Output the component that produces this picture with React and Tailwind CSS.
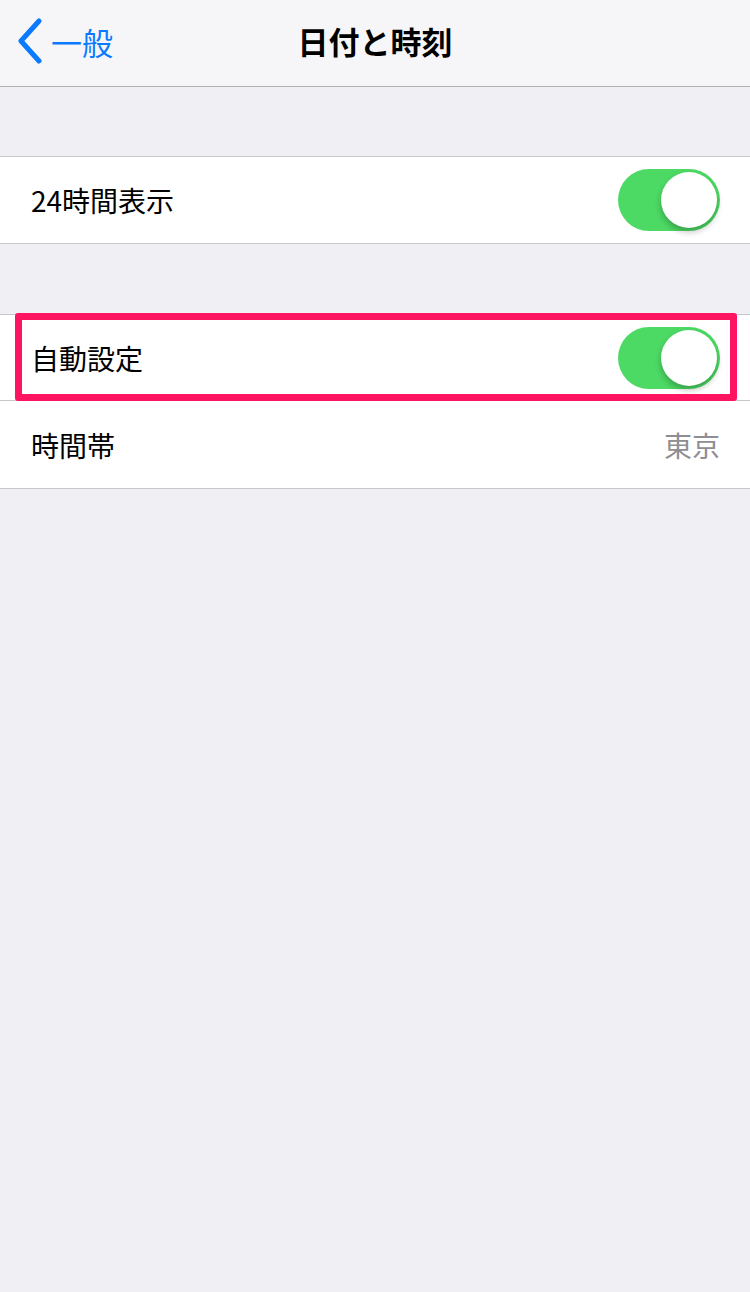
import React from "react";

function Toggle() {
  return (
    <div className="relative w-[102px] h-[62px] rounded-full bg-[#4cd964]">
      <div className="absolute right-[3px] top-[3px] w-[56px] h-[56px] rounded-full bg-white shadow-[0_4px_6px_rgba(0,0,0,0.25)]" />
    </div>
  );
}

export default function App() {
  const font = { fontFamily: '"Noto Sans CJK JP", "Noto Sans", sans-serif' };
  return (
    <div className="w-[750px] h-[1292px] bg-[#efeff4] flex flex-col" style={font}>
      {/* Nav bar */}
      <div className="h-[87px] bg-[#f6f6f8] border-b border-[#b2b2b2] relative flex items-center justify-center">
        <div className="absolute left-[16px] top-0 h-full flex items-center gap-[7px] -mt-[2px]">
          <svg width="28" height="46" viewBox="0 0 28 46">
            <path d="M23 3 L5 23 L23 43" fill="none" stroke="#0a7aff" strokeWidth="5" strokeLinecap="round" strokeLinejoin="round" />
          </svg>
          <span className="text-[31px] text-[#0a7aff] leading-none">一般</span>
        </div>
        <span className="text-[31px] font-bold text-black leading-none -mt-[5px]">日付と時刻</span>
      </div>

      <div className="h-[69px]" />

      {/* Group 1 */}
      <div className="bg-white border-y border-[#c8c7cc]">
        <div className="h-[86px] flex items-center justify-between pl-[31px] pr-[30px]">
          <span className="text-[28px] text-black leading-none">24時間表示</span>
          <Toggle />
        </div>
      </div>

      <div className="h-[70px]" />

      {/* Group 2 */}
      <div className="bg-white border-y border-[#c8c7cc]">
        <div className="relative">
          <div className="h-[86px] flex items-center justify-between pl-[31px] pr-[30px] border-b border-[#c8c7cc]">
            <span className="text-[28px] text-black leading-none">自動設定</span>
            <Toggle />
          </div>
          <div className="absolute left-[15px] right-[13px] top-[-2px] h-[88px] border-[7px] border-[#ff1461] rounded-[3px]" />
        </div>
        <div className="h-[87px] flex items-center justify-between pl-[31px] pr-[30px]">
          <span className="text-[28px] text-black leading-none">時間帯</span>
          <span className="text-[28px] text-[#8e8e93] leading-none">東京</span>
        </div>
      </div>

      <div className="flex-1" />
    </div>
  );
}
